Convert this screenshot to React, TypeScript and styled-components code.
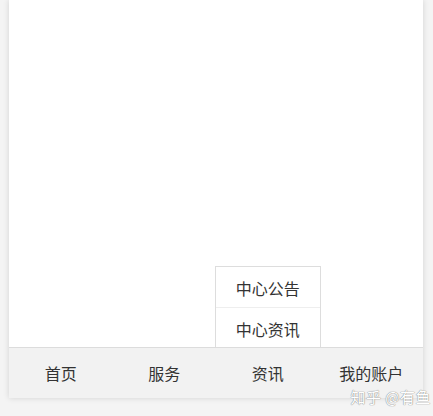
import React from "react"
import styled, { createGlobalStyle } from "styled-components"

const GlobalStyle = createGlobalStyle`
  html, body {
    margin: 0;
    padding: 0;
    background: #f4f4f4;
    font-family: "Noto Sans CJK SC", "Noto Sans", sans-serif;
  }
`

const tabs = ["首页", "服务", "资讯", "我的账户"]
const newsMenu = ["中心公告", "中心资讯"]

export default function App() {
  return (
    <>
      <GlobalStyle />
      <Page>
        <Panel>
          <Content />
          <TabBar>
            {tabs.map((t, i) => (
              <Tab key={t}>
                {t}
                {i === 2 && (
                  <Menu>
                    {newsMenu.map((m) => (
                      <MenuItem key={m}>{m}</MenuItem>
                    ))}
                  </Menu>
                )}
              </Tab>
            ))}
          </TabBar>
        </Panel>
        <Watermark>知乎 @有鱼</Watermark>
      </Page>
    </>
  )
}

const Page = styled.div`
  position: relative;
  height: 416px;
  padding: 0 10px 0 9px;
  box-sizing: border-box;
`

const Panel = styled.div`
  height: 398px;
  display: flex;
  flex-direction: column;
  background: #fff;
  box-shadow: 0 0 6px rgba(0, 0, 0, 0.14);
`

const Content = styled.div`
  flex: 1;
`

const TabBar = styled.nav`
  height: 50px;
  display: grid;
  grid-template-columns: repeat(4, 1fr);
  background: #f2f2f2;
  border-top: 1px solid #dcdcdc;
`

const Tab = styled.div`
  position: relative;
  display: flex;
  align-items: center;
  justify-content: center;
  font-size: 16px;
  color: #333;
`

const Menu = styled.ul`
  position: absolute;
  bottom: 100%;
  left: -1px;
  right: -1px;
  margin: 0 0 1px;
  padding: 0;
  list-style: none;
  background: #fff;
  border: 1px solid #dddddd;
  border-bottom: none;
`

const MenuItem = styled.li`
  height: 40px;
  box-sizing: border-box;
  padding-top: 2px;
  display: flex;
  align-items: center;
  justify-content: center;
  font-size: 16px;
  color: #333;
  & + & {
    border-top: 1px solid #eeeeee;
  }
`

const Watermark = styled.div`
  position: absolute;
  right: 2px;
  top: 386px;
  font-size: 15px;
  color: #fff;
  letter-spacing: 0.5px;
  text-shadow: 0 0 1px #888, 0 0 1px #888;
`
